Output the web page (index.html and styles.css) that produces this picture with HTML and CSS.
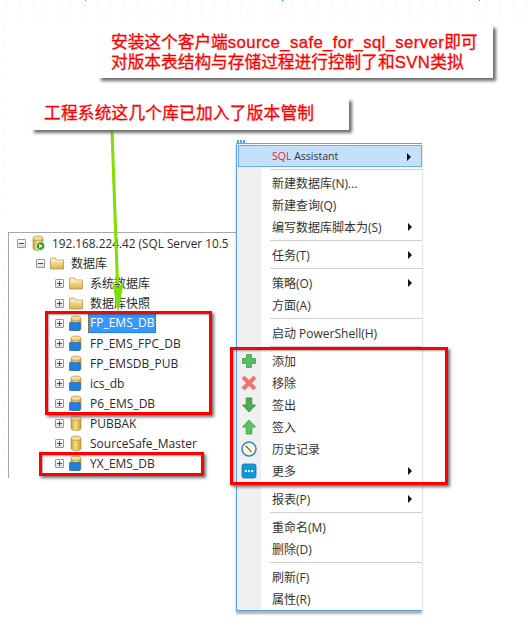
FILE: index.html
```html
<!DOCTYPE html>
<html lang="zh-CN">
<head>
    <meta charset="UTF-8">
    <title>source_safe_for_sql_server</title>
    <link rel="stylesheet" href="styles.css">
</head>
<body>
    <svg class="defs" width="0" height="0">
        <defs>
            <linearGradient id="gold" x1="0" x2="1" y1="0" y2="0">
                <stop offset="0" stop-color="#c9a030"/>
                <stop offset="0.45" stop-color="#f6dc86"/>
                <stop offset="1" stop-color="#c49a2c"/>
            </linearGradient>
            <linearGradient id="folder" x1="0" x2="0" y1="0" y2="1">
                <stop offset="0" stop-color="#fdf3c4"/>
                <stop offset="1" stop-color="#dfb24c"/>
            </linearGradient>
            <symbol id="db" viewBox="0 0 14 16">
                <path d="M2 3.500v10c0 1.200 2.200 2 5 2s5-.8 5-2v-10z" fill="url(#gold)" stroke="#a98a3a" stroke-width=".6"/>
                <ellipse cx="7" cy="3.200" rx="5" ry="2.200" fill="#f3dc95" stroke="#a98a3a" stroke-width=".6"/>
            </symbol>
            <symbol id="folder-icon" viewBox="0 0 14 16">
                <path d="M.5 4V14h13V5H6.500L5.300 3H1.300z" fill="url(#folder)" stroke="#a68a4a" stroke-width=".7"/>
                <path d="M1.300 6h11.400" stroke="#fffbe6" stroke-width=".8"/>
            </symbol>
        </defs>
    </svg>

    <div class="speckle-top"></div>
    <div class="speckle-left"></div>

    <section class="tree">
        <div class="tree-row">
            <span class="toggle minus"></span>
            <svg class="ico" viewBox="0 0 14 16">
                <use href="#db"/>
                <circle cx="9.500" cy="11" r="4.300" fill="#3b9c2e" stroke="#fff" stroke-width=".8"/>
                <path d="M8.200 8.700v4.600l3.500-2.300z" fill="#fff"/>
            </svg>
            <span class="server-name">192.168.224.42 (SQL Server 10.5</span>
        </div>
        <div class="tree-row lvl-1">
            <span class="toggle minus"></span>
            <svg class="ico"><use href="#folder-icon"/></svg>
            <span>数据库</span>
        </div>
        <div class="tree-row lvl-2">
            <span class="toggle plus"></span>
            <svg class="ico"><use href="#folder-icon"/></svg>
            <span>系统数据库</span>
        </div>
        <div class="tree-row lvl-2">
            <span class="toggle plus"></span>
            <svg class="ico"><use href="#folder-icon"/></svg>
            <span>数据库快照</span>
        </div>
        <div class="tree-row lvl-2">
            <span class="toggle plus"></span>
            <svg class="ico" viewBox="0 0 14 16"><use href="#db"/><rect class="db-badge" x="0.3" y="7.500" width="11" height="8" rx="1"/></svg>
            <span class="selected">FP_EMS_DB</span>
        </div>
        <div class="tree-row lvl-2">
            <span class="toggle plus"></span>
            <svg class="ico" viewBox="0 0 14 16"><use href="#db"/><rect class="db-badge" x="0.3" y="7.500" width="11" height="8" rx="1"/></svg>
            <span>FP_EMS_FPC_DB</span>
        </div>
        <div class="tree-row lvl-2">
            <span class="toggle plus"></span>
            <svg class="ico" viewBox="0 0 14 16"><use href="#db"/><rect class="db-badge" x="0.3" y="7.500" width="11" height="8" rx="1"/></svg>
            <span>FP_EMSDB_PUB</span>
        </div>
        <div class="tree-row lvl-2">
            <span class="toggle plus"></span>
            <svg class="ico" viewBox="0 0 14 16"><use href="#db"/><rect class="db-badge" x="0.3" y="7.500" width="11" height="8" rx="1"/></svg>
            <span>ics_db</span>
        </div>
        <div class="tree-row lvl-2">
            <span class="toggle plus"></span>
            <svg class="ico" viewBox="0 0 14 16"><use href="#db"/><rect class="db-badge" x="0.3" y="7.500" width="11" height="8" rx="1"/></svg>
            <span>P6_EMS_DB</span>
        </div>
        <div class="tree-row lvl-2">
            <span class="toggle plus"></span>
            <svg class="ico" viewBox="0 0 14 16"><use href="#db"/></svg>
            <span>PUBBAK</span>
        </div>
        <div class="tree-row lvl-2">
            <span class="toggle plus"></span>
            <svg class="ico" viewBox="0 0 14 16"><use href="#db"/></svg>
            <span>SourceSafe_Master</span>
        </div>
        <div class="tree-row lvl-2">
            <span class="toggle plus"></span>
            <svg class="ico" viewBox="0 0 14 16"><use href="#db"/><rect class="db-badge" x="0.3" y="7.500" width="11" height="8" rx="1"/></svg>
            <span>YX_EMS_DB</span>
        </div>
    </section>

    <section class="menu">
        <div class="menu-grip"></div>
        <div class="menu-item active"><span class="menu-label"><span class="sql">SQL</span> Assistant</span><i class="caret"></i></div>
        <div class="menu-sep short"></div>
        <div class="menu-item"><span class="menu-label">新建数据库(N)...</span></div>
        <div class="menu-item"><span class="menu-label">新建查询(Q)</span></div>
        <div class="menu-item"><span class="menu-label">编写数据库脚本为(S)</span><i class="caret"></i></div>
        <div class="menu-sep"></div>
        <div class="menu-item"><span class="menu-label">任务(T)</span><i class="caret"></i></div>
        <div class="menu-sep"></div>
        <div class="menu-item"><span class="menu-label">策略(O)</span><i class="caret"></i></div>
        <div class="menu-item"><span class="menu-label">方面(A)</span></div>
        <div class="menu-sep"></div>
        <div class="menu-item"><span class="menu-label">启动 PowerShell(H)</span></div>
        <div class="menu-sep"></div>
        <div class="menu-item">
            <svg class="menu-ico" viewBox="0 0 16 16"><path d="M5.500 1.500h5v4h4v5h-4v4h-5v-4h-4v-5h4z" fill="#55c060" stroke="#3c9c48" stroke-width=".8"/></svg>
            <span class="menu-label">添加</span>
        </div>
        <div class="menu-item">
            <svg class="menu-ico" viewBox="0 0 16 16"><path d="M3.500 1L8 5.500 12.500 1 15 3.500 10.500 8 15 12.500 12.500 15 8 10.500 3.500 15 1 12.500 5.500 8 1 3.500z" fill="#f0726a" stroke="#e0605a" stroke-width=".6"/></svg>
            <span class="menu-label">移除</span>
        </div>
        <div class="menu-item">
            <svg class="menu-ico" viewBox="0 0 16 16"><path d="M5.200 1h5.600v7H14.500L8 15 1.500 8h3.700z" fill="#4cae4a" stroke="#2e8b35" stroke-width=".8"/></svg>
            <span class="menu-label">签出</span>
        </div>
        <div class="menu-item">
            <svg class="menu-ico" viewBox="0 0 16 16"><path d="M5.200 15h5.600V8H14.500L8 1 1.500 8h3.700z" fill="#5cc45a" stroke="#2e9b3f" stroke-width=".8"/></svg>
            <span class="menu-label">签入</span>
        </div>
        <div class="menu-item">
            <svg class="menu-ico" viewBox="0 0 16 16"><circle cx="8" cy="8" r="7" fill="#fdf5dc" stroke="#2f86c8" stroke-width="1.500"/><path d="M8 8L4.500 4.800M8 8l2.200 2.800" stroke="#6b5a30" stroke-width="1.100" fill="none"/></svg>
            <span class="menu-label">历史记录</span>
        </div>
        <div class="menu-item">
            <svg class="menu-ico" viewBox="0 0 16 16"><rect x="1" y="1" width="14" height="14" rx="2" fill="#0f9ad6" stroke="#0b7cb3" stroke-width=".8"/><path d="M3.800 7h2v2h-2zM7 7h2v2H7zM10.200 7h2v2h-2z" fill="#fff"/></svg>
            <span class="menu-label">更多</span><i class="caret"></i>
        </div>
        <div class="menu-sep"></div>
        <div class="menu-item"><span class="menu-label">报表(P)</span><i class="caret"></i></div>
        <div class="menu-sep"></div>
        <div class="menu-item"><span class="menu-label">重命名(M)</span></div>
        <div class="menu-item"><span class="menu-label">删除(D)</span></div>
        <div class="menu-sep"></div>
        <div class="menu-item"><span class="menu-label">刷新(F)</span></div>
        <div class="menu-item"><span class="menu-label">属性(R)</span></div>
    </section>

    <!-- annotations pasted on top of the screenshot -->
    <svg class="pointer" width="40" height="200" viewBox="0 0 40 200">
        <path d="M12 0l5.500 153" stroke="#7fe000" stroke-width="3" fill="none"/>
        <path d="M12 150l6 32 6-32-6 7z" fill="#7fe000"/>
    </svg>
    <div class="note note-install">安装这个客户端<span class="latin">source_safe_for_sql_server</span>即可<br>对版本表结构与存储过程进行控制了和<span class="latin">SVN</span>类拟</div>
    <div class="note note-system">工程系统这几个库已加入了版本管制</div>
    <div class="mark mark-five"></div>
    <div class="mark mark-one"></div>
    <div class="mark mark-menu"></div>
</body>
</html>
```
FILE: styles.css
```css
html, body {
    margin: 0;
    height: 100%;
    background: #fff;
    overflow: hidden;
}

body {
    position: relative;
    width: 530px;
    height: 633px;
    font-family: "Open Sans", "Noto Sans CJK SC", sans-serif;
    color: #2b2b2b;
}

.defs {
    position: absolute;
}

/* faint scan noise along the top and left edges */
.speckle-top {
    position: absolute;
    left: 0;
    top: 0;
    width: 530px;
    height: 20px;
    background-image:
        linear-gradient(to right, #10b090 1px, transparent 1px),
        radial-gradient(circle, #e0e0e0 0.5px, transparent 1px),
        radial-gradient(circle, #ececec 0.5px, transparent 1px);
    background-size: 197px 1px, 13px 7px, 23px 11px;
    background-position: 85px 0, 0 2px, 6px 5px;
    background-repeat: repeat-x, repeat, repeat;
}

.speckle-left {
    position: absolute;
    left: 0;
    top: 20px;
    width: 8px;
    height: 460px;
    background-image: radial-gradient(circle, #d8dce2 0.5px, transparent 1px);
    background-size: 7px 17px;
}

/* object explorer */
.tree {
    position: absolute;
    left: 8px;
    top: 232px;
    width: 228px;
    height: 246px;
    box-sizing: border-box;
    background: #fff;
    border-top: 1px solid #a8a8a8;
    border-left: 1px solid #a8a8a8;
    font-size: 12px;
    overflow: hidden;
}

.tree-row {
    display: flex;
    align-items: center;
    height: 20px;
    padding-left: 8px;
    white-space: nowrap;
}

.lvl-1 { padding-left: 27px; }
.lvl-2 { padding-left: 46px; }

.server-name {
    font-size: 11.800px;
}

.toggle {
    position: relative;
    flex: none;
    width: 7px;
    height: 7px;
    margin-right: 5px;
    border: 1px solid #8d9aa5;
    border-radius: 1px;
    background: linear-gradient(#fff, #d8dde2);
}

.toggle::before {
    content: "";
    position: absolute;
    left: 1px;
    top: 3px;
    width: 5px;
    height: 1px;
    background: #33506b;
}

.toggle.plus::after {
    content: "";
    position: absolute;
    left: 3px;
    top: 1px;
    width: 1px;
    height: 5px;
    background: #33506b;
}

.ico {
    flex: none;
    width: 14px;
    height: 16px;
    margin-right: 7px;
}

.db-badge {
    fill: #1e7fe0;
    stroke: #0f5aa8;
    stroke-width: .6;
}

.selected {
    margin: 0 -2px;
    padding: 0 2px;
    line-height: 20px;
    background: #3399ff;
    color: #fff;
    outline: 1px dotted #7a5a30;
    outline-offset: -1px;
}

/* context menu */
.menu {
    position: absolute;
    left: 236px;
    top: 143px;
    width: 186px;
    height: 468px;
    box-sizing: border-box;
    padding: 1px 0 0 1px;
    background: linear-gradient(to right, #f0f0f0 24px, #fff 24px);
    border: 1px solid #5ba4ec;
    border-right: 0;
    box-shadow: 0 3px 2px rgba(0, 0, 0, 0.3);
    font-size: 12px;
    color: #333;
}

.menu-grip {
    position: absolute;
    left: 0;
    top: -4px;
    width: 9px;
    height: 3px;
    background: repeating-linear-gradient(to right, #5ba4ec 0 2px, #fff 2px 3px);
}

.menu-item {
    position: relative;
    display: flex;
    align-items: center;
    height: 22px;
    box-sizing: border-box;
}

.menu-item.active {
    background: #c5e0fb;
    border: 1px solid #6aaef0;
    font-size: 10.500px;
}

.menu-label {
    position: absolute;
    left: 34px;
}

.active .menu-label {
    left: 33px;
}

.sql {
    color: #e8202a;
}

.menu-sep {
    height: 1px;
    margin: 2px 0 3px 32px;
    background: #cfcfcf;
}

.menu-sep.short {
    margin-bottom: 2px;
}

.menu-ico {
    margin-left: 3px;
    width: 16px;
    height: 16px;
}

.caret {
    position: absolute;
    right: 10px;
    top: 7px;
    border-left: 4px solid #111;
    border-top: 4px solid transparent;
    border-bottom: 4px solid transparent;
}

/* annotations */
.pointer {
    position: absolute;
    left: 100px;
    top: 131px;
}

.note {
    position: absolute;
    box-sizing: border-box;
    background: #fff;
    color: #f00;
    box-shadow: 3px 3px 3px #6f6f6f;
    font-family: "Liberation Sans", "Noto Sans CJK SC", sans-serif;
    font-size: 16.700px;
    -webkit-text-stroke: 0.3px #f00;
    white-space: nowrap;
}

.latin {
    letter-spacing: 0.4px;
}

.note-install {
    left: 98px;
    top: 25px;
    width: 395px;
    height: 53px;
    padding: 8px 0 0 13px;
    line-height: 20px;
}

.note-system {
    left: 31px;
    top: 98px;
    width: 318px;
    height: 32px;
    padding-left: 13px;
    line-height: 32px;
    letter-spacing: 0.2px;
}

.mark {
    position: absolute;
    box-sizing: border-box;
    border: 3px solid #f00;
    box-shadow: 2px 2px 3px #6f6f6f, inset 1px 1px 2px rgba(0, 0, 0, 0.35);
}

.mark-five {
    left: 45px;
    top: 311px;
    width: 167px;
    height: 104px;
}

.mark-one {
    left: 39px;
    top: 452px;
    width: 165px;
    height: 24px;
}

.mark-menu {
    left: 230px;
    top: 347px;
    width: 218px;
    height: 138px;
}
```
